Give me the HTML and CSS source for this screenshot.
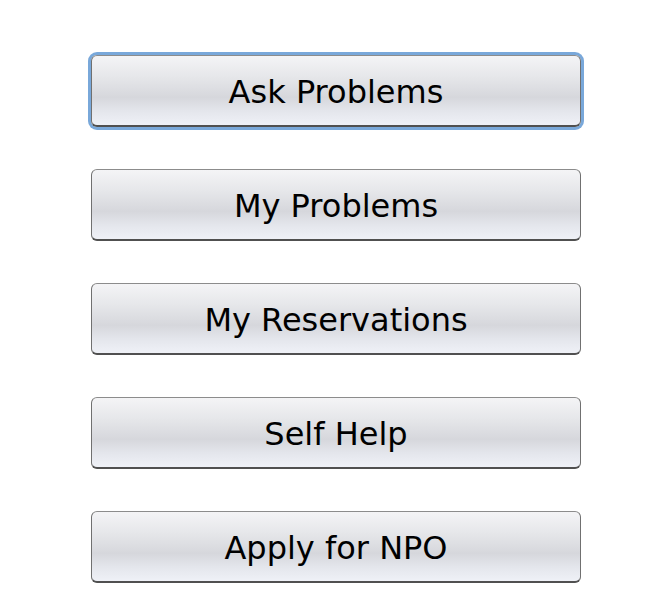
FILE: index.html
```html
<!DOCTYPE html>
<html>
<head>
<meta charset="utf-8">
<link rel="stylesheet" href="styles.css">
</head>
<body>
<div class="menu">
  <button class="btn focused">Ask Problems</button>
  <button class="btn">My Problems</button>
  <button class="btn">My Reservations</button>
  <button class="btn">Self Help</button>
  <button class="btn">Apply for NPO</button>
</div>
</body>
</html>
```
FILE: styles.css
```css
html, body {
  margin: 0;
  padding: 0;
  background: #ffffff;
}
.menu {
  display: flex;
  flex-direction: column;
  gap: 42px;
  padding: 55px 0 0 91px;
  width: 490px;
}
.btn {
  box-sizing: border-box;
  width: 490px;
  height: 72px;
  margin: 0;
  padding: 2px 0 0 0;
  border: 1px solid #8c8c8c;
  border-bottom: 2px solid #505050;
  border-left-color: #707070;
  border-right-color: #707070;
  border-radius: 6px;
  background: linear-gradient(to bottom, #f4f4f6 0%, #e6e7ea 30%, #d6d7dc 60%, #e4e6ec 80%, #eff1f7 100%);
  font-family: "DejaVu Sans", Verdana, sans-serif;
  font-size: 32px;
  color: #000;
  text-align: center;
  line-height: 1;
}
.focused {
  box-shadow: 0 0 0 3px #79a8da;
}
```
